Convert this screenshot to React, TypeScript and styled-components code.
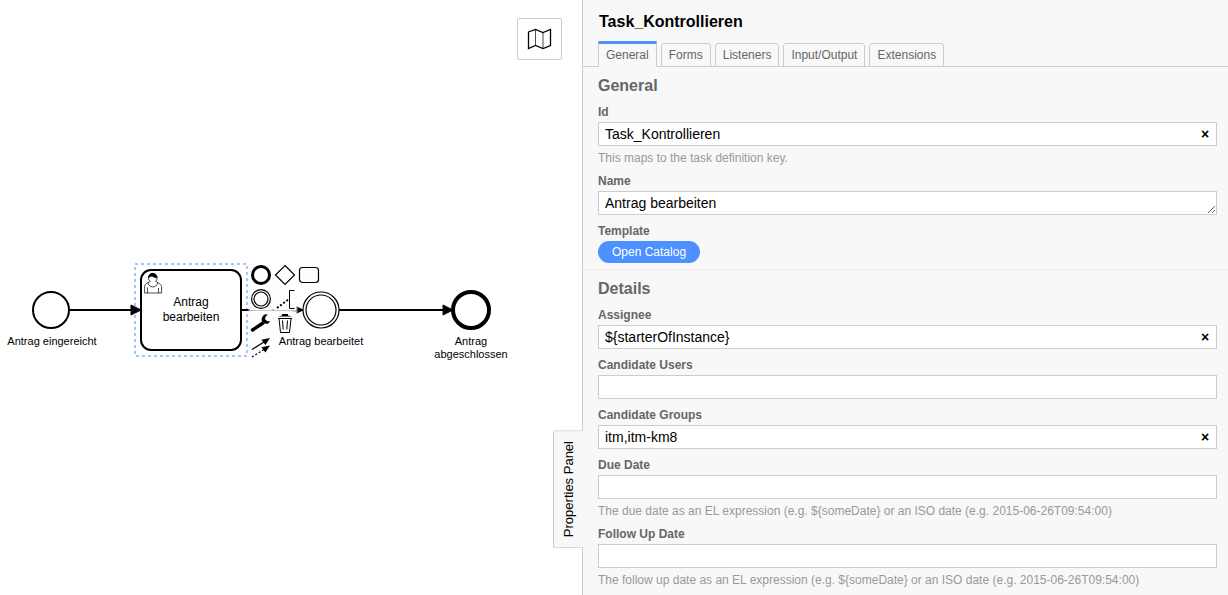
import React, { useState } from 'react';
import styled, { createGlobalStyle } from 'styled-components';

const GlobalStyle = createGlobalStyle`
  *, *::before, *::after { box-sizing: border-box; }
  html, body { margin: 0; height: 100%; }
  body {
    font-family: "Liberation Sans", Arial, sans-serif;
    font-size: 12px;
    background: #fff;
    color: #000;
    overflow: hidden;
  }
  button, input, textarea { font-family: inherit; }
`;

const Modeler = styled.main`
  display: grid;
  grid-template-columns: minmax(0, 582fr) minmax(0, 646fr);
  height: 100vh;
`;

const Canvas = styled.section`
  position: relative;
  overflow: hidden;
  background: #fff;
`;

const Diagram = styled.svg`
  display: block;
  width: 100%;
  height: 100%;
  font-family: "Liberation Sans", Arial, sans-serif;
`;

const MapToggle = styled.button`
  position: absolute;
  top: 18px;
  right: 20px;
  display: flex;
  align-items: center;
  justify-content: center;
  width: 45px;
  height: 42px;
  padding: 0;
  background: #fff;
  border: 1px solid #ccc;
  border-radius: 2px;
`;

const ContextPad = styled.div`
  position: absolute;
  left: 250px;
  top: 264px;
  display: flex;
  flex-direction: column;
  gap: 2px;
`;

const PadRow = styled.div`
  display: flex;
  gap: 2px;
`;

const PadEntry = styled.button`
  width: 22px;
  height: 22px;
  padding: 0;
  border: 0;
  background: #fefefe;
  box-shadow: 0 0 2px 1px #fefefe;

  svg { display: block; }
`;

const Panel = styled.aside`
  position: relative;
  min-height: 0;
  background: #f8f8f8;
  border-left: 1px solid #ccc;
`;

const PanelToggle = styled.button`
  position: absolute;
  right: 100%;
  bottom: 47px;
  width: 30px;
  padding: 10px 0;
  border: 1px solid #ccc;
  border-left: 0;
  border-radius: 0 2px 2px 0;
  background: #f8f8f8;
  color: #000;
  font-size: 13px;
  line-height: 28px;
  white-space: nowrap;
  writing-mode: vertical-rl;
  transform: rotate(180deg);
`;

const ToggleSlot = styled.div`
  position: absolute;
  left: 0;
  bottom: 0;
`;

const PanelBody = styled.div`
  height: 100%;
  overflow: hidden;
`;

const Title = styled.h1`
  margin: 0;
  padding: 13px 15px 10px 16px;
  font-size: 16px;
  line-height: 18px;
  font-weight: bold;
`;

const TabBar = styled.div`
  display: flex;
  align-items: flex-end;
  gap: 4px;
  height: 26px;
  padding: 0 15px;
  box-shadow: inset 0 -1px 0 #ccc;
`;

const Tab = styled.button<{ $active: boolean }>`
  height: ${p => (p.$active ? 26 : 24)}px;
  padding: 0 7px;
  border: 1px solid #ccc;
  border-top: ${p => (p.$active ? '3px solid #4d90ff' : '1px solid #ccc')};
  border-bottom-color: ${p => (p.$active ? '#f8f8f8' : '#ccc')};
  border-radius: ${p => (p.$active ? '1px 1px' : '3px 3px')} 0 0;
  background: #f8f8f8;
  color: #666;
  font-size: 12px;
  line-height: 22px;
`;

const Group = styled.section`
  padding: 10px 11px 6px 15px;

  & + & { border-top: 1px solid #eee; }
`;

const GroupTitle = styled.h2`
  margin: 0 0 1px;
  font-size: 16px;
  line-height: 18px;
  font-weight: bold;
  color: #666;
`;

const FieldBox = styled.div`
  padding-top: 9px;
`;

const Label = styled.label`
  display: block;
  margin-bottom: 3px;
  font-weight: bold;
  line-height: 14px;
  color: #666;
`;

const InputFrame = styled.div`
  display: flex;
  height: 24px;
  border: 1px solid #ccc;
  background: #fff;
`;

const TextInput = styled.input`
  flex: 1;
  min-width: 0;
  padding: 0 6px;
  border: 0;
  outline: 0;
  background: transparent;
  color: #000;
  font-size: 14px;
`;

const ClearButton = styled.button`
  width: 22px;
  padding: 0;
  border: 0;
  background: transparent;
  color: #000;
  font-size: 14px;
  line-height: 22px;
  font-weight: bold;
`;

const TextArea = styled.textarea`
  display: block;
  width: 100%;
  height: 24px;
  padding: 3px 6px;
  border: 1px solid #ccc;
  outline: 0;
  background: #fff;
  color: #000;
  font-size: 14px;
  line-height: 16px;
  resize: vertical;
  overflow: auto;
`;

const Hint = styled.p`
  margin: 5px 0 0;
  line-height: 14px;
  color: #999;
`;

const CatalogButton = styled.button`
  display: block;
  height: 22px;
  padding: 0 14px;
  border: 0;
  border-radius: 11px;
  background: #4d90ff;
  color: #fff;
  font-size: 12px;
  line-height: 22px;
`;

type FieldProps = { id: string; label: string; initial?: string; hint?: string };

function Field({ id, label, initial = '', hint }: FieldProps) {
  const [value, setValue] = useState(initial);
  return (
    <FieldBox>
      <Label htmlFor={id}>{label}</Label>
      <InputFrame>
        <TextInput id={id} type="text" value={value} onChange={e => setValue(e.target.value)} />
        {value && (
          <ClearButton type="button" aria-label={`Clear ${label}`} onClick={() => setValue('')}>
            ×
          </ClearButton>
        )}
      </InputFrame>
      {hint && <Hint>{hint}</Hint>}
    </FieldBox>
  );
}

function Arrow({ from, to }: { from: number; to: number }) {
  return (
    <g>
      <path d={`M${from} 310H${to - 2}`} stroke="#000" strokeWidth="2" />
      <path d={`M${to - 10} 305L${to} 310L${to - 10} 315Z`} fill="#000" stroke="#000" />
    </g>
  );
}

function ProcessDiagram() {
  return (
    <Diagram role="img" aria-label="Process diagram">
      <rect x="135" y="264" width="112" height="92" fill="none" stroke="#a0c5ff" strokeWidth="2" strokeDasharray="3 3" />

      <Arrow from={69} to={141} />
      <Arrow from={242} to={303} />
      <Arrow from={339} to={453} />

      <circle cx="51" cy="310" r="18" fill="#fff" stroke="#000" strokeWidth="2" />
      <rect x="141" y="270" width="100" height="80" rx="10" fill="#fff" stroke="#000" strokeWidth="2" />
      <circle cx="321" cy="310" r="18" fill="#fff" stroke="#000" strokeWidth="1.2" />
      <circle cx="321" cy="310" r="15" fill="#fff" stroke="#000" strokeWidth="1.2" />
      <circle cx="471" cy="310" r="18" fill="#fff" stroke="#000" strokeWidth="4" />

      <g transform="translate(155.5 281.5)" stroke="#000" strokeWidth="0.7">
        <path
          fill="#fff"
          d="m0 0c.909-.845 1.594-2.049 1.594-3.385 0-2.554-1.805-4.622-4.357-4.622-2.552 0-4.288 2.068-4.288 4.622 0 1.348.974 2.562 1.896 3.405-.529.187-5.669 2.097-5.794 4.756v6.718h17v-6.718c0-2.298-5.528-4.595-6.051-4.776zm-8 6l0 5.5m11 0l0-5"
        />
        <path fill="none" d="m2.162 1.009c0 2.447-2.158 4.431-4.821 4.431-2.665 0-4.822-1.981-4.822-4.431" />
        <path
          fill="#000"
          d="m-6.9-3.8c0 0 2.251-2.358 4.274-1.177 2.024 1.181 4.221 1.537 4.124.965-.098-.57-.117-3.791-4.191-4.136-3.575 0-4.208 3.367-4.207 4.348z"
        />
      </g>

      <g textAnchor="middle" fontSize="12">
        <text x="191" y="306">Antrag</text>
        <text x="191" y="321">bearbeiten</text>
      </g>
      <g textAnchor="middle" fontSize="11">
        <text x="52" y="345">Antrag eingereicht</text>
        <text x="321" y="345">Antrag bearbeitet</text>
        <text x="471" y="345">Antrag</text>
        <text x="471" y="358">abgeschlossen</text>
      </g>
    </Diagram>
  );
}

const padRows: { label: string; art: React.ReactNode }[][] = [
  [
    { label: 'Append end event', art: <circle cx="11" cy="11" r="8.5" strokeWidth="3" /> },
    { label: 'Append gateway', art: <path d="M11 1.5L20.5 11L11 20.5L1.5 11Z" strokeWidth="1.2" /> },
    { label: 'Append task', art: <rect x="1.5" y="3.5" width="19" height="15" rx="3" strokeWidth="1.2" /> },
  ],
  [
    {
      label: 'Append intermediate event',
      art: (
        <>
          <circle cx="11" cy="11" r="9.4" strokeWidth="1.2" />
          <circle cx="11" cy="11" r="7" strokeWidth="1.2" />
        </>
      ),
    },
    {
      label: 'Append text annotation',
      art: (
        <>
          <path d="M20.5 2.5H15.5V20.5H20.5" />
          <path d="M3 20L15 11" strokeWidth="2" strokeDasharray="2 1.9" />
        </>
      ),
    },
  ],
  [
    {
      label: 'Change type',
      art: (
        <>
          <path d="M2.6 18L13 11" strokeWidth="3.4" strokeLinecap="round" />
          <path d="M18 2.8A4.6 4.6 0 1 0 20.2 9.6L17 9L14.9 6.9L16 4Z" fill="#000" stroke="none" />
        </>
      ),
    },
    {
      label: 'Remove',
      art: (
        <>
          <path d="M5 6.5L6.5 20.5H15.5L17 6.5M8.5 8.5L9.2 17.5M13.5 8.5L12.8 17.5" />
          <path d="M4 6.5H18" />
          <path d="M4 4.5L8 3.5V2H14V3.5L18 4.5Z" fill="#000" stroke="none" />
        </>
      ),
    },
  ],
  [
    {
      label: 'Connect',
      art: (
        <>
          <path d="M2 13.5L14 6" strokeWidth="1.2" />
          <path d="M20 2L15.4 9L11.4 3.8Z" fill="#000" stroke="none" />
          <path d="M2 21L14 13.5" strokeWidth="1.2" strokeDasharray="2 2" />
          <path d="M20 9.5L15.4 16.5L11.4 11.3Z" fill="#000" stroke="none" />
        </>
      ),
    },
  ],
];

const tabs = ['General', 'Forms', 'Listeners', 'Input/Output', 'Extensions'];

export default function App() {
  const [active, setActive] = useState('General');
  return (
    <>
      <GlobalStyle />
      <Modeler>
        <Canvas>
          <ProcessDiagram />
          <ContextPad>
            {padRows.map((row, i) => (
              <PadRow key={i}>
                {row.map(({ label, art }) => (
                  <PadEntry key={label} type="button" aria-label={label}>
                    <svg width="22" height="22" viewBox="0 0 22 22" fill="none" stroke="#000">
                      {art}
                    </svg>
                  </PadEntry>
                ))}
              </PadRow>
            ))}
          </ContextPad>
          <MapToggle type="button" aria-label="Toggle minimap">
            <svg width="25" height="22" viewBox="0 0 25 22" fill="none" stroke="#000">
              <path d="M1.5 4L8.5 1.5L16 4.5L23.5 1.5V17.5L16 20.5L8.5 17.5L1.5 20.5Z" strokeWidth="1.3" />
              <path d="M8.5 1.5V17.5M16 4.5V20.5" strokeWidth="0.7" />
            </svg>
          </MapToggle>
        </Canvas>

        <Panel>
          <ToggleSlot>
            <PanelToggle type="button">Properties Panel</PanelToggle>
          </ToggleSlot>
          <PanelBody>
            <Title>Task_Kontrollieren</Title>
            <TabBar role="tablist">
              {tabs.map(name => (
                <Tab
                  key={name}
                  type="button"
                  role="tab"
                  aria-selected={name === active}
                  $active={name === active}
                  onClick={() => setActive(name)}
                >
                  {name}
                </Tab>
              ))}
            </TabBar>
            <Group>
              <GroupTitle>General</GroupTitle>
              <Field id="task-id" label="Id" initial="Task_Kontrollieren" hint="This maps to the task definition key." />
              <FieldBox>
                <Label htmlFor="task-name">Name</Label>
                <TextArea id="task-name" rows={1} defaultValue="Antrag bearbeiten" />
              </FieldBox>
              <FieldBox>
                <Label htmlFor="task-template">Template</Label>
                <CatalogButton id="task-template" type="button">Open Catalog</CatalogButton>
              </FieldBox>
            </Group>
            <Group>
              <GroupTitle>Details</GroupTitle>
              <Field id="assignee" label="Assignee" initial="${starterOfInstance}" />
              <Field id="candidate-users" label="Candidate Users" />
              <Field id="candidate-groups" label="Candidate Groups" initial="itm,itm-km8" />
              <Field
                id="due-date"
                label="Due Date"
                hint="The due date as an EL expression (e.g. ${someDate} or an ISO date (e.g. 2015-06-26T09:54:00)"
              />
              <Field
                id="follow-up-date"
                label="Follow Up Date"
                hint="The follow up date as an EL expression (e.g. ${someDate} or an ISO date (e.g. 2015-06-26T09:54:00)"
              />
            </Group>
          </PanelBody>
        </Panel>
      </Modeler>
    </>
  );
}
